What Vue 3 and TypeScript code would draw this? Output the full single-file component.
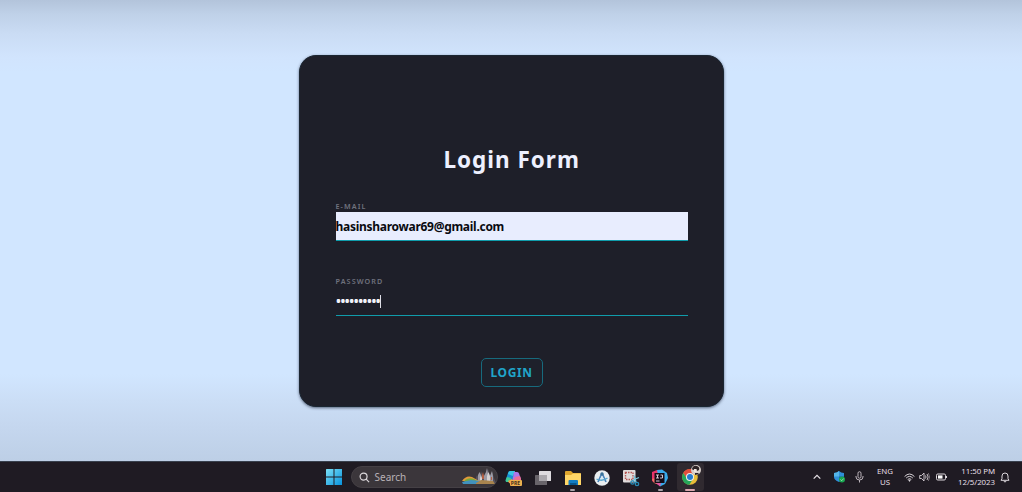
<script setup lang="ts">
import { ref } from 'vue'

const email = ref('hasinsharowar69@gmail.com')
const maskedPassword = '•'.repeat(10)
</script>

<template>
  <div class="screen">
    <main class="page">
      <form class="card" @submit.prevent>
        <h1>Login Form</h1>
        <label class="label">E-MAIL</label>
        <div class="field filled"><span class="email">{{ email }}</span></div>
        <label class="label second">PASSWORD</label>
        <div class="field"><span class="dots">{{ maskedPassword }}</span><i class="caret"></i></div>
        <button class="login" type="submit"><span>LOGIN</span></button>
      </form>
    </main>

    <footer class="taskbar">
      <svg class="start" viewBox="0 0 16 16">
        <defs>
          <linearGradient id="win" x1="0" y1="0" x2="16" y2="16" gradientUnits="userSpaceOnUse">
            <stop offset="0" stop-color="#7be0f5" /><stop offset="1" stop-color="#0792dd" />
          </linearGradient>
        </defs>
        <path fill="url(#win)" d="M.5 0H7.5V7.5H0V.5ZM8.5 0H16V7.5H8.5ZM0 8.5H7.5V16H0ZM8.5 8.5H16V16H8.5Z" />
      </svg>
      <div class="search">
        <svg class="lens" viewBox="0 0 12 12" fill="none" stroke="#dcd8dc" stroke-width="1.3">
          <circle cx="5" cy="5" r="3.8" /><path d="M7.8 7.8L11 11" />
        </svg>
        <span>Search</span>
        <svg class="castle" viewBox="0 0 36 20">
          <path fill="#56525c" d="M13 16L16 8L18 11L20 4L22 10L25 6L27 2L29 9L31 5L33 11L35 16Z" />
          <path fill="#9c9aa5" d="M17 15V8L18.5 5L20 8V15ZM23 14V9L25 5L26 1L27 7V14ZM29 14V9L31 4L32 9V14Z" />
          <path fill="#d6d2d3" d="M19 15V11L20 8L21 11V15ZM26 15V9L27.5 5L29 9V15Z" />
          <path fill="#b55f43" d="M21 8L22 5L23 9V12H21ZM30 10H31V13H30Z" />
          <path fill="#e29b39" d="M1 14Q5 8 11 10L18 14Z" />
          <path fill="#77a83e" d="M4 13Q8 10 13 12L19 16H3Z" />
          <path fill="#4191bd" d="M1 15L10 13L20 14L15 17H2Z" />
          <path fill="#a9844e" d="M15 16L20 13L32 14L34 17H15Z" />
        </svg>
      </div>
      <div class="apps">
        <div class="cell">
          <svg width="18" height="18" viewBox="0 0 18 18">
            <path fill="#168fd5" d="M5 2H10L7 13H2Q0 13 1 10L3 4Q3.5 2 5 2Z" />
            <path fill="#40c994" d="M2 8L6 9L5 13H2Q0 13 1 10Z" />
            <path fill="#37c5e4" d="M5 2H10L8 7L3 5Q3.5 2 5 2Z" />
            <path fill="#ae76e9" d="M9 3H12Q14 3 14.5 6L16 10Q16 13 13 13H7Z" />
            <path fill="#ed6f94" d="M10 8L15 7L16 10V13H8Z" />
            <path fill="#ef9f45" d="M3 12L7 10L10 15H6Q4 15 3 12Z" />
            <rect x="5" y="11" width="12" height="6" rx="1" fill="#eeb04f" />
            <text x="5.8" y="16" font-size="5" font-weight="700" fill="#4a301d">PRE</text>
          </svg>
        </div>
        <div class="cell">
          <svg width="18" height="18" viewBox="0 0 18 18">
            <rect x="1" y="6" width="12" height="10" rx=".5" fill="#68646a" />
            <rect x="5" y="2" width="12" height="10" rx=".5" fill="#dedbdf" />
            <rect x="5" y="6" width="8" height="6" fill="#aaa7ac" />
          </svg>
        </div>
        <div class="cell running">
          <svg width="18" height="18" viewBox="0 0 18 18">
            <path fill="#dfa62d" d="M1 3Q1 2 2 2H7L9 4H16Q17 4 17 5V16H1Z" />
            <path fill="#ffd667" d="M1 6H7L9 4.5H17V16H1Z" />
            <path fill="#137dc4" d="M4.5 12Q4.5 11 5.5 11H13Q14 11 14 12V16H4.5Z" />
            <path fill="#0a578e" d="M6 14H12.5V16H6Z" />
          </svg>
        </div>
        <div class="cell">
          <svg width="18" height="18" viewBox="0 0 18 18">
            <circle cx="9" cy="9" r="7.7" fill="#e9eef0" />
            <path d="M9 4L5 13M9 4L13 13" fill="none" stroke="#4a83b9" stroke-width="1.7" />
            <path d="M3.5 10Q9 13 14.5 9" fill="none" stroke="#54a6ce" stroke-width="1.4" />
            <circle cx="9" cy="5" r="1.7" fill="#397299" />
            <path d="M7 10L9 7L11 10Z" fill="#d8edf4" />
          </svg>
        </div>
        <div class="cell">
          <svg width="18" height="18" viewBox="0 0 18 18">
            <rect x="1" y="1" width="12.5" height="12.5" rx="1" fill="#e0dcdc" />
            <rect x="3.5" y="3.5" width="7.5" height="7" fill="none" stroke="#b75955" stroke-width="1.4" stroke-dasharray="1.5 1" />
            <path d="M10 11.5L17 8.5M12 6.5L14.3 14" stroke="#76c5dc" stroke-width="1.3" />
            <g fill="none" stroke="#278bb6" stroke-width="1.3"><circle cx="10.5" cy="13.5" r="1.7" /><circle cx="15" cy="15" r="1.7" /></g>
          </svg>
        </div>
        <div class="cell running">
          <svg width="18" height="18" viewBox="0 0 18 18">
            <path fill="#e73469" d="M1 3L6 1L11 3L9 17L4 14L1 12Z" />
            <path fill="#ef7760" d="M1 10L5 9L6 15L3 14Z" />
            <path fill="#38a9ea" d="M6 1L11 .5L16 4L17 9L14 15L9 17.5Z" />
            <path fill="#df58a5" d="M3 12L10 14L9 17.5Z" />
            <rect x="3.5" y="4" width="10" height="10" fill="#150d18" />
            <path d="M5 6H8M6.5 6V9M5 9H8M9.5 6H11.5V9H9M5 12H8.5" fill="none" stroke="#e4d9e3" stroke-width=".9" />
          </svg>
        </div>
        <div class="cell active">
          <svg width="22" height="22" viewBox="0 0 22 22">
            <circle cx="10" cy="13" r="7.8" fill="#e9bd38" />
            <path fill="#e14d3d" d="M3.2 9A7.8 7.8 0 0 1 17 9.5L10 10L6.8 14.5Z" />
            <path fill="#25a65a" d="M3.2 9A7.8 7.8 0 0 0 9.3 20.8L13 15L10 16.5L6.8 14.5Z" />
            <circle cx="10" cy="13" r="4" fill="#f0f0eb" /><circle cx="10" cy="13" r="3" fill="#247cd0" />
            <circle cx="16" cy="6" r="5" fill="#d7cec9" />
            <path fill="#2c2224" d="M12 5Q13 1 17 2Q20 3 19 6L17 7L16 5L13 6ZM15 9H18L19 10L15 11Z" />
            <path fill="#f1e6df" d="M14 5H16.5V8H14Z" />
          </svg>
        </div>
      </div>

      <div class="tray">
        <svg class="chev" width="8" height="6" viewBox="0 0 8 6" fill="none" stroke="#e8e4e8" stroke-width="1.2"><path d="M.7 4.7L4 1.4L7.3 4.7" /></svg>
        <svg class="shield" width="13" height="12" viewBox="0 0 13 12">
          <path fill="#2f8fd8" d="M6 0Q8 2 11 2V6Q11 9 6 11Q1 9 1 6V2Q4 2 6 0Z" />
          <path fill="#55b5e7" d="M6 0V5.5H1V2Q4 2 6 0Z" /><path fill="#1764a3" d="M6 5.5H11Q11 9 6 11Z" />
          <circle cx="9" cy="8.5" r="3" fill="#19a651" /><path d="M7.5 8.5L8.7 9.7L10.7 7.5" fill="none" stroke="#c5f1cf" stroke-width=".7" />
        </svg>
        <svg class="mic" width="9" height="12" viewBox="0 0 9 12" fill="none" stroke="#bdb5bc">
          <rect x="3" y=".7" width="3" height="6.5" rx="1.5" /><path d="M1 5V6Q1 9 4.5 9Q8 9 8 6V5M4.5 9V11.5" />
        </svg>
        <div class="lang"><span>ENG</span><span>US</span></div>
        <svg class="wifi" width="11" height="9" viewBox="0 0 11 9" fill="none" stroke="#d8d3d8">
          <path d="M.6 3.5Q5.5-1.5 10.4 3.5M2.2 5Q5.5 1.8 8.8 5M3.7 6.5Q5.5 4.8 7.3 6.5" /><circle cx="5.5" cy="7.6" r=".6" fill="#eee" />
        </svg>
        <svg class="volume" width="11" height="10" viewBox="0 0 11 10" fill="none" stroke="#d8d3d8" stroke-width=".9">
          <path d="M.7 3.5H2.5L5 1V9L2.5 6.5H.7ZM6.5 3.5Q7.6 5 6.5 6.5M8 2Q10.3 5 8 8" /><path d="M9.3 1Q12 5 9.3 9" stroke="#797379" />
        </svg>
        <svg class="battery" width="11" height="8" viewBox="0 0 11 8">
          <rect x=".5" y="1" width="9" height="6" rx="1.3" fill="none" stroke="#ddd8dd" /><rect x="2" y="2.4" width="4.5" height="3.2" fill="#fff" /><path d="M10.5 3V5" stroke="#ddd8dd" />
        </svg>
        <div class="clock"><span>11:50 PM</span><span>12/5/2023</span></div>
        <svg class="bell" width="10" height="11" viewBox="0 0 10 11" fill="none" stroke="#ddd8dd">
          <path d="M1 8.3L2 6.5V4Q2 1 5 1Q8 1 8 4V6.5L9 8.3ZM3.6 9Q5 11.2 6.4 9" />
        </svg>
      </div>
    </footer>
  </div>
</template>

<style>
body { margin: 0; overflow: hidden; }
</style>

<style scoped>
* { box-sizing: border-box; }
.screen { width: 1022px; height: 492px; display: flex; flex-direction: column; font-family: "Noto Sans", "Open Sans", sans-serif; }
.page {
  height: 461px; padding-top: 55px; display: flex; justify-content: center; align-items: flex-start;
  background: linear-gradient(#b3c4db 0, #bfd1e8 14px, #cadcf4 34px, #d1e4fd 57px, #d1e6ff 72px, #d1e6ff 374px, #cbdef6 400px, #c5d7ef 425px, #bdcfe6 461px);
}
.card {
  width: 424.5px; height: 351.5px; margin-left: 1px; padding: 91px 35px 0 35.25px; border-radius: 17px;
  display: flex; flex-direction: column; background: #1e1f29; border: 1px solid #1b2632;
  box-shadow: 0 1px 3px rgb(31 38 62 / 65%);
}
h1 { margin: 0; height: 30px; line-height: 26px; text-align: center; color: #edf0ff; font-size: 22.5px; font-weight: 700; letter-spacing: 1px; white-space: nowrap; }
.label { height: 11px; margin-top: 24px; line-height: 10px; font-size: 7.2px; font-weight: 600; letter-spacing: 1.1px; color: #70727e; }
.label.second { margin-top: 35px; }
.field { height: 29px; display: flex; align-items: center; border-bottom: 1px solid #109cab; color: #f2f2fa; }
.filled { background: #e8edfe; color: #090a10; }
.email { font-size: 12px; font-weight: 700; letter-spacing: -.28px; }
.dots { font-size: 15.5px; line-height: 20px; letter-spacing: -1.4px; }
.caret { width: 1px; height: 13px; background: #dddde6; }
.login { width: 62px; height: 29px; margin: 42.4px auto 0; padding: 0; border: 1px solid #176a7d; border-radius: 5px; background: #1e212b; color: #20a5ca; font: 700 12px "Noto Sans", sans-serif; letter-spacing: .65px; }
.taskbar { height: 31px; padding-left: 326px; display: flex; align-items: center; background: #1f1b23; border-top: 1px solid #38404d; color: #e4dfe4; }
.start { width: 16px; height: 16px; }
.search { width: 147px; height: 22px; margin-left: 8.5px; padding-left: 7px; border-radius: 11px; background: #3b363b; border: 1px solid #454045; display: flex; align-items: center; font-size: 10px; color: #b8b1b6; }
.lens { width: 11px; height: 11px; margin-right: 5px; }
.castle { width: 36px; height: 20px; margin-left: auto; }
.apps { display: flex; margin-left: 2px; height: 30px; align-items: center; }
.cell { width: 29.25px; height: 28px; padding-top: 1px; display: flex; flex-direction: column; align-items: center; justify-content: center; border-radius: 3px; position: relative; }
.cell svg { display: block; }
.running::after, .active::after { content: ""; position: absolute; bottom: 0; width: 5px; height: 2px; border-radius: 1px; background: #aaa3aa; }
.active { background: #302a30; width: 27px; margin-left: 1.5px; }
.active::after { width: 10px; background: #d9a6ad; }
.active svg { margin-top: -5px; margin-left: 2px; }
.tray { display: flex; align-items: center; margin-left: auto; height: 30px; padding-right: 12px; }
.shield { margin-left: 12px; }
.mic { margin-left: 9.5px; }
.lang { display: flex; flex-direction: column; align-items: center; width: 20px; margin-left: 11px; font-size: 7.9px; line-height: 11px; }
.wifi { margin-left: 9px; }
.volume { margin-left: 4px; }
.battery { margin-left: 6px; }
.clock { display: flex; flex-direction: column; align-items: flex-end; width: 42px; margin-left: 6px; font-size: 7.9px; line-height: 11px; letter-spacing: -.05px; white-space: nowrap; }
.bell { margin-left: 5px; }
</style>
